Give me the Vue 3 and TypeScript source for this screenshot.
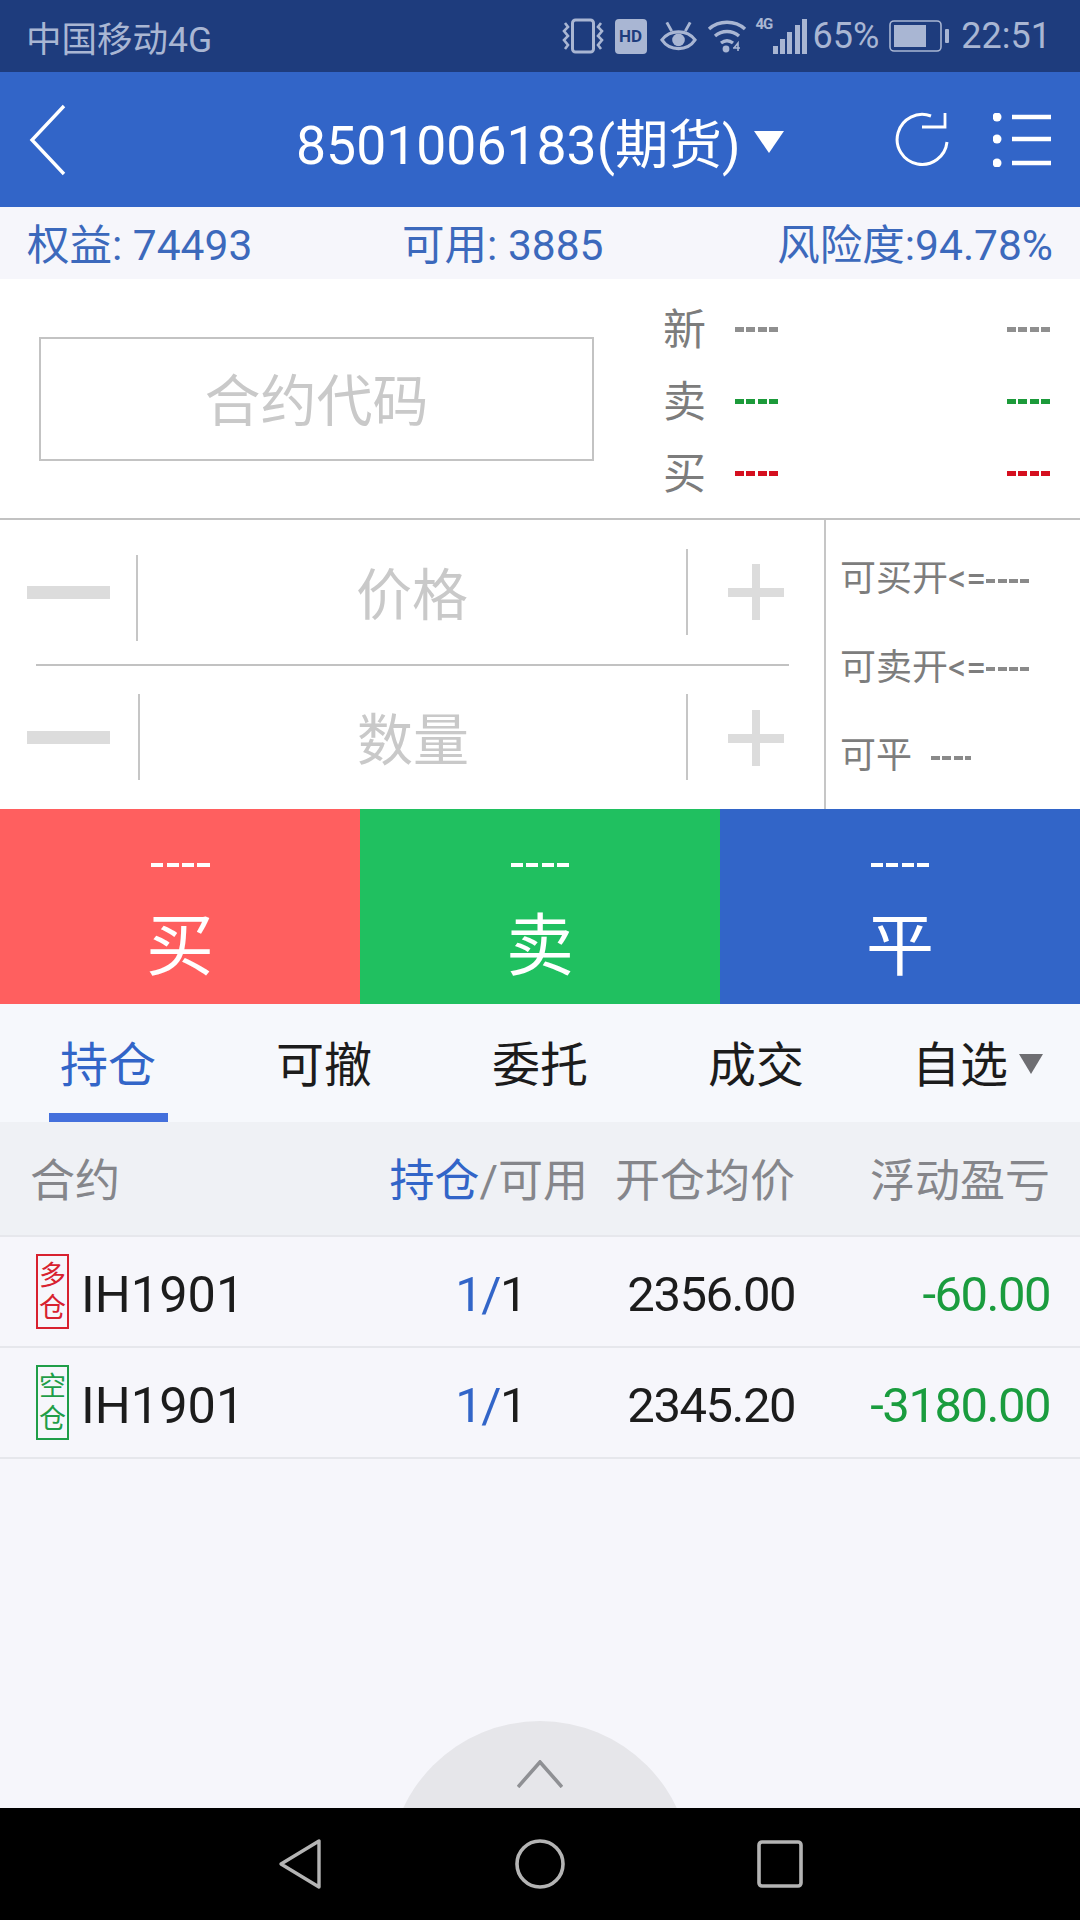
<script setup lang="ts">
interface Quote { label: string; tone: string }
const quotes: Quote[] = [
  { label: '新', tone: 'grey' },
  { label: '卖', tone: 'green' },
  { label: '买', tone: 'red' },
]
const tabs = ['持仓', '可撤', '委托', '成交']
const actions = [
  { label: '买', tone: 'buy' },
  { label: '卖', tone: 'sell' },
  { label: '平', tone: 'close' },
]
const rows = [
  { tag: ['多', '仓'], tone: 'long', name: 'IH1901', price: '2356.00', pnl: '-60.00' },
  { tag: ['空', '仓'], tone: 'short', name: 'IH1901', price: '2345.20', pnl: '-3180.00' },
]
</script>

<template>
  <div class="screen">
    <div class="status">
      <span class="carrier">中国移动4G</span>
      <div class="status-right">
        <svg width="44" height="36" viewBox="0 0 44 36" class="si vib">
          <rect x="11.5" y="2" width="21" height="32" rx="3" fill="none" stroke="#a9b6d3" stroke-width="3"/>
          <path d="M4 5l3 4-4 4 4 5-4 4 4 5-3 4M40 5l-3 4 4 4-4 5 4 4-4 5 3 4" fill="none" stroke="#a9b6d3" stroke-width="2.6"/>
        </svg>
        <span class="hd">HD</span>
        <svg width="37" height="34" viewBox="0 0 38 34" class="si">
          <path d="M2 21c8-11 26-11 34 0-8 12-26 12-34 0z" fill="none" stroke="#a9b6d3" stroke-width="3.2"/>
          <circle cx="19" cy="21" r="6.5" fill="#a9b6d3"/>
          <path d="M7 3l5 9M31 3l-5 9" stroke="#a9b6d3" stroke-width="3"/>
        </svg>
        <svg width="40" height="36" viewBox="0 0 40 36" class="si wifi">
          <path d="M2 11c10-9 26-9 36 0M8 18c7-6 17-6 24 0M14 25c4-3 8-3 12 0" fill="none" stroke="#a9b6d3" stroke-width="3.4"/>
          <circle cx="19" cy="31" r="3.4" fill="#a9b6d3"/>
          <path d="M27 30l4-5v8M26 30h7" fill="none" stroke="#a9b6d3" stroke-width="1.6"/>
        </svg>
        <div class="signal">
          <span class="mini">4G</span>
          <svg width="34" height="35" viewBox="0 0 34 35">
            <rect x="0" y="27" width="5" height="8" fill="#a9b6d3"/>
            <rect x="7" y="20" width="5" height="15" fill="#a9b6d3"/>
            <rect x="14" y="13" width="5" height="22" fill="#a9b6d3"/>
            <rect x="22" y="6" width="5" height="29" fill="#a9b6d3"/>
            <rect x="29" y="0" width="5" height="35" fill="#a9b6d3"/>
          </svg>
        </div>
        <span class="stext pct">65%</span>
        <svg width="60" height="32" viewBox="0 0 60 32" class="si">
          <rect x="1" y="1" width="51" height="30" rx="4" fill="none" stroke="#a9b6d3" stroke-width="1.6"/>
          <rect x="5" y="5" width="32" height="22" fill="#a9b6d3"/>
          <rect x="56" y="9" width="4" height="14" rx="1" fill="#a9b6d3"/>
        </svg>
        <span class="stext time">22:51</span>
      </div>
    </div>

    <header class="head">
      <svg width="40" height="72" viewBox="0 0 40 72" class="back">
        <path d="M36 2L4 36l32 34" fill="none" stroke="#fff" stroke-width="3.4"/>
      </svg>
      <div class="title">8501006183(期货)<i class="title-caret"></i></div>
      <div class="head-icons">
        <svg width="54" height="56" viewBox="0 0 54 56">
          <path d="M36 4A25 25 0 1 0 52 30" fill="none" stroke="#fff" stroke-width="3"/>
          <path d="M27 15L50 15 50 1" fill="none" stroke="#fff" stroke-width="2.8"/>
        </svg>
        <svg width="58" height="54" viewBox="0 0 58 54">
          <circle cx="4" cy="4" r="4.5" fill="#fff"/>
          <circle cx="4" cy="26" r="4.5" fill="#fff"/>
          <circle cx="4" cy="50" r="4.5" fill="#fff"/>
          <path d="M19 4h39M19 26h39M19 50h39" stroke="#fff" stroke-width="4.5"/>
        </svg>
      </div>
    </header>

    <div class="info">
      <span>权益: 74493</span>
      <span class="info-mid">可用: 3885</span>
      <span>风险度:94.78%</span>
    </div>

    <section class="quote">
      <div class="contract">合约代码</div>
      <div class="quote-list">
        <div v-for="q in quotes" :key="q.label" class="quote-row">
          <span class="quote-label">{{ q.label }}</span>
          <span class="dash" :class="q.tone"></span>
          <span class="dash right" :class="q.tone"></span>
        </div>
      </div>
    </section>

    <section class="trade">
      <div class="steppers">
        <div class="stepper">
          <div class="minus-cell low"><i class="minus"></i></div>
          <div class="field">价格</div>
          <div class="plus-cell"><i class="plus"></i></div>
        </div>
        <div class="stepper-rule"></div>
        <div class="stepper">
          <div class="minus-cell alt"><i class="minus"></i></div>
          <div class="field">数量</div>
          <div class="plus-cell"><i class="plus"></i></div>
        </div>
      </div>
      <div class="limits">
        <div>可买开&lt;=<i class="sd"></i></div>
        <div>可卖开&lt;=<i class="sd"></i></div>
        <div>可平<i class="sd gap"></i></div>
      </div>
    </section>

    <section class="actions">
      <div v-for="a in actions" :key="a.label" class="action" :class="a.tone">
        <span class="action-dash"></span>
        <span class="action-label">{{ a.label }}</span>
      </div>
    </section>

    <nav class="tabs">
      <div v-for="(t, i) in tabs" :key="t" class="tab" :class="{ active: i === 0 }">{{ t }}</div>
      <div class="tab last">自选<i class="tab-caret"></i></div>
    </nav>

    <div class="grid thead">
      <span>合约</span>
      <span class="r"><b>持仓</b>/可用</span>
      <span class="r">开仓均价</span>
      <span class="r">浮动盈亏</span>
    </div>
    <div v-for="row in rows" :key="row.price" class="grid trow">
      <span class="cell-name">
        <span class="tag" :class="row.tone"><span>{{ row.tag[0] }}</span><span>{{ row.tag[1] }}</span></span>
        <span class="name">{{ row.name }}</span>
      </span>
      <span class="qty"><b>1/</b>1</span>
      <span class="r">{{ row.price }}</span>
      <span class="r pnl">{{ row.pnl }}</span>
    </div>

    <div class="spacer">
      <div class="dome">
        <svg width="46" height="28" viewBox="0 0 46 28"><path d="M1 27L23 2l22 25" fill="none" stroke="#8f9094" stroke-width="3.6"/></svg>
      </div>
    </div>

    <footer class="sysnav">
      <svg width="44" height="52" viewBox="0 0 44 52"><path d="M41 3v46L3 26z" fill="none" stroke="#b4b4b4" stroke-width="3.4" stroke-linejoin="round"/></svg>
      <svg width="50" height="52" viewBox="0 0 50 52"><circle cx="25" cy="26" r="23" fill="none" stroke="#b4b4b4" stroke-width="3.6"/></svg>
      <svg width="46" height="48" viewBox="0 0 46 48"><rect x="2" y="2" width="42" height="44" rx="3" fill="none" stroke="#b4b4b4" stroke-width="3.6"/></svg>
    </footer>
  </div>
</template>

<style>
html, body { margin: 0; padding: 0; background: #f6f6fb; }
</style>

<style scoped>
.screen {
  width: 1080px; height: 1920px; display: flex; flex-direction: column; overflow: hidden;
  background: #f6f6fb; color: #1c1c1c;
  font-family: Roboto, "Noto Sans CJK SC", sans-serif;
}
.status {
  height: 72px; flex: none; background: #1e3c7d; color: #a9b6d3;
  display: flex; align-items: center; justify-content: space-between; padding: 0 29px 0 26px; box-sizing: border-box;
}
.carrier { font-size: 35.5px; }
.status-right { display: flex; align-items: center; }
.si { margin-right: 10px; }
.wifi { margin-right: 8px; }
.stext { font-size: 36px; }
.pct { margin: 0 10px 0 6px; }
.time { margin-left: 2px; }
.hd {
  width: 32px; height: 35px; border-radius: 4px; background: #a9b6d3; color: #1e3c7d; font-size: 17px; font-weight: 700;
  display: flex; align-items: center; justify-content: center; margin-right: 13px;
}
.signal { position: relative; width: 52px; height: 36px; display: flex; justify-content: flex-end; align-items: flex-end; }
.mini { position: absolute; left: 1px; top: -2px; font-size: 15px; line-height: 16px; font-weight: 700; letter-spacing: -1px; }

.head {
  height: 135px; flex: none; background: #3265c8; color: #fff; box-sizing: border-box; padding: 0 29px 0 28px;
  display: flex; align-items: center;
}
.back { flex: none; }
.title { font-size: 53.5px; display: flex; align-items: center; margin: 12px 0 0 228px; line-height: 72px; white-space: nowrap; }
.title-caret { width: 0; height: 0; border-left: 15px solid transparent; border-right: 15px solid transparent; border-top: 22px solid #fff; margin: 0 0 8px 13px; }
.head-icons { display: flex; align-items: center; gap: 44px; margin-left: auto; }

.info {
  height: 72px; flex: none; display: flex; justify-content: space-between; align-items: center;
  padding: 0 27px 4px; box-sizing: border-box; color: #3c69bc; font-size: 42.5px; background: #f6f6fb;
}
.info-mid { margin-right: 24px; }

.quote { height: 241px; flex: none; box-sizing: border-box; background: #fff; border-bottom: 2px solid #c2c2c2; display: flex; padding: 0 29px 0 39px; align-items: center; }
.contract {
  width: 555px; height: 124px; box-sizing: border-box; border: 2px solid #c3c3c3; color: #c9c9c9; font-size: 56px;
  display: flex; align-items: center; justify-content: center; padding-bottom: 4px; flex: none;
}
.quote-list { flex: 1; margin-left: 70px; display: flex; flex-direction: column; gap: 30px; margin-top: 6px; }
.quote-row { display: flex; align-items: center; height: 42px; }
.quote-label { font-size: 43px; color: #7c7c7c; width: 43px; margin-right: 29px; line-height: 42px; margin-left: -1px; }
.dash { width: 44px; height: 5px; background: repeating-linear-gradient(90deg, #8f8f8f 0 9px, transparent 9px 11.5px); }
.dash.right { margin-left: auto; }
.dash.green { background: repeating-linear-gradient(90deg, #1c9a3a 0 9px, transparent 9px 11.5px); }
.dash.red { background: repeating-linear-gradient(90deg, #d50f1f 0 9px, transparent 9px 11.5px); }

.trade { height: 289px; flex: none; display: flex; background: #fff; }
.steppers { width: 824px; border-right: 2px solid #c6c6c6; flex: none; display: flex; flex-direction: column; }
.stepper { flex: 1; display: flex; align-items: center; }
.stepper-rule { height: 2px; background: #c2c2c2; margin: 0 35px 0 36px; flex: none; }
.minus-cell { width: 138px; flex: none; display: flex; align-items: center; padding-left: 27px; box-sizing: border-box; height: 86px; border-right: 2px solid #c6c6c6; }
.minus-cell.low { margin-top: 12px; }
.minus-cell.low .minus { margin-top: -10px; }
.minus-cell.alt { width: 140px; }
.minus { width: 83px; height: 13px; background: #dcdcdc; }
.field { flex: 1; text-align: center; color: #c9c9c9; font-size: 56px; padding-bottom: 3px; }
.plus-cell { width: 138px; flex: none; height: 86px; border-left: 2px solid #c6c6c6; display: flex; align-items: center; justify-content: center; box-sizing: border-box; }
.plus { position: relative; width: 56px; height: 56px; display: block; margin-top: 1px; }
.plus::before { content: ""; position: absolute; left: 0; right: 0; top: 24px; height: 9px; background: #dcdcdc; }
.plus::after { content: ""; position: absolute; top: 0; bottom: 0; left: 24px; width: 8px; background: #dcdcdc; }
.limits { flex: 1; display: flex; flex-direction: column; justify-content: space-between; padding: 36px 0 30px 14px; color: #7d7d7d; font-size: 36px; }
.limits div { line-height: 46px; white-space: nowrap; display: flex; align-items: center; }
.sd { width: 44px; height: 4px; background: repeating-linear-gradient(90deg, #8a8a8a 0 9px, transparent 9px 11.5px); margin-top: 3px; }
.sd.gap { width: 40px; margin-left: 19px; }

.actions { height: 195px; flex: none; display: grid; grid-template-columns: repeat(3, 1fr); color: #fff; }
.action { display: flex; flex-direction: column; align-items: center; padding-top: 54px; box-sizing: border-box; }
.action.buy { background: #ff5f5f; }
.action.sell { background: #20c060; }
.action.close { background: #3265c8; }
.action-dash { width: 59px; height: 4px; background: repeating-linear-gradient(90deg, #fff 0 12px, transparent 12px 15.5px); }
.action-label { font-size: 68px; line-height: 80px; margin-top: 40px; }

.tabs { height: 118px; flex: none; display: grid; grid-template-columns: 216px 216px 216px 216px 216px; background: #f6f8fc; font-size: 48px; box-sizing: border-box; }
.tab { display: flex; align-items: center; justify-content: center; padding-bottom: 4px; position: relative; }
.tab.active { color: #3265c8; }
.tab.active::after { content: ""; position: absolute; left: 49px; width: 119px; height: 9px; bottom: 0; background: #4470dc; }
.tab.last { justify-content: flex-start; padding-left: 48px; }
.tab-caret { width: 0; height: 0; border-left: 12px solid transparent; border-right: 12px solid transparent; border-top: 20px solid #6e6e72; margin: 5px 0 0 11px; }

.grid { display: grid; grid-template-columns: 345px 213px 207px 1fr; align-items: center; padding: 0 30px; box-sizing: border-box; flex: none; border-bottom: 2px solid #e6e7ec; white-space: nowrap; }
.thead { height: 115px; background: #eff1f5; color: #85868b; font-size: 45px; padding-bottom: 2px; }
.thead b { font-weight: 400; color: #3265c8; }
.r { text-align: right; }
.trow { height: 111px; font-size: 49px; letter-spacing: -1.5px; padding-top: 6px; }
.cell-name { display: flex; align-items: center; gap: 12px; margin-left: 6px; margin-top: -6px; }
.name { font-size: 50.5px; letter-spacing: 0; margin-top: 6px; }
.tag { width: 33px; height: 75px; box-sizing: border-box; border: 2px solid; display: flex; flex-direction: column; align-items: center; justify-content: center; font-size: 27px; line-height: 32px; letter-spacing: 0; }
.tag.long { color: #d8212f; }
.tag.short { color: #1f9e48; }
.qty { text-align: right; padding-right: 62px; }
.qty b { font-weight: 400; color: #3265c8; }
.pnl { color: #1a9c3e; }

.spacer { flex: 1; position: relative; overflow: hidden; min-height: 0; }
.dome {
  position: absolute; left: 389px; top: 262px; width: 302px; height: 302px; background: #e6e6ea;
  border-radius: 50%; display: flex; justify-content: center; align-items: flex-start; padding-top: 39px; box-sizing: border-box;
}
.sysnav { height: 112px; flex: none; background: #000; display: flex; align-items: center; justify-content: center; }
.sysnav svg:nth-child(1) { margin-right: 193px; }
.sysnav svg:nth-child(2) { margin-right: 192px; }
</style>
